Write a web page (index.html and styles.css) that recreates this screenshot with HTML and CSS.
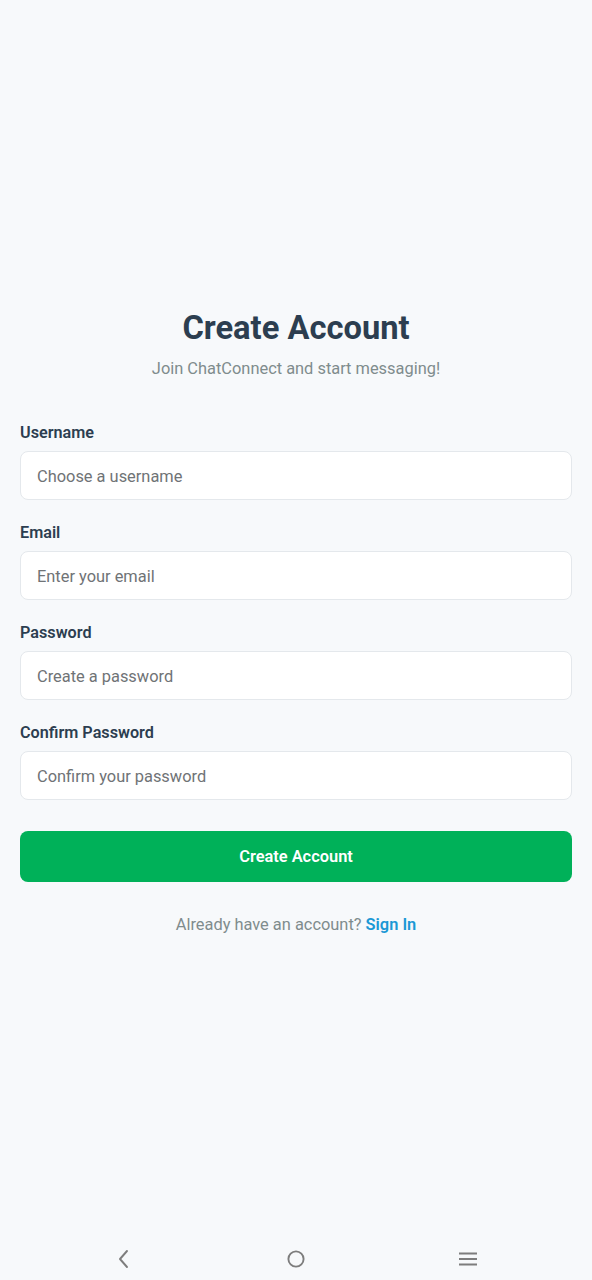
FILE: index.html
```html
<!DOCTYPE html>
<html lang="en">
<head>
<meta charset="utf-8">
<meta name="viewport" content="width=device-width, initial-scale=1">
<title>Create Account</title>
<link rel="stylesheet" href="styles.css">
</head>
<body>
<div class="screen">
  <main class="content">
    <h1 class="title">Create Account</h1>
    <p class="subtitle">Join ChatConnect and start messaging!</p>
    <form class="form">
      <div class="field">
        <label class="label">Username</label>
        <input class="input" type="text" placeholder="Choose a username">
      </div>
      <div class="field">
        <label class="label">Email</label>
        <input class="input" type="email" placeholder="Enter your email">
      </div>
      <div class="field">
        <label class="label">Password</label>
        <input class="input" type="password" placeholder="Create a password">
      </div>
      <div class="field">
        <label class="label">Confirm Password</label>
        <input class="input" type="password" placeholder="Confirm your password">
      </div>
      <button class="btn" type="button">Create Account</button>
    </form>
    <p class="signin">Already have an account? <a class="link" href="#">Sign In</a></p>
  </main>
  <nav class="navbar">
    <svg class="nav-icon" width="24" height="24" viewBox="0 0 24 24"><path d="M16 4 L9 12 L16 20" fill="none" stroke="#7d7d7d" stroke-width="1.9" stroke-linecap="round" stroke-linejoin="round"/></svg>
    <svg class="nav-icon" width="24" height="24" viewBox="0 0 24 24"><circle cx="12" cy="12" r="7.6" fill="none" stroke="#7d7d7d" stroke-width="1.9"/></svg>
    <svg class="nav-icon" width="24" height="24" viewBox="0 0 24 24"><path d="M3 6.5 H21 M3 12 H21 M3 17.5 H21" fill="none" stroke="#7d7d7d" stroke-width="1.9"/></svg>
  </nav>
</div>
</body>
</html>
```
FILE: styles.css
```css
* { box-sizing: border-box; }
html, body {
  margin: 0;
  padding: 0;
  background: #f7f9fb;
  font-family: Roboto, "Liberation Sans", Arial, sans-serif;
}
.screen {
  width: 592px;
  height: 1280px;
  display: flex;
  flex-direction: column;
}
.content {
  flex: 1;
  padding: 309px 20px 0;
  display: flex;
  flex-direction: column;
}
.title {
  margin: 0 0 12px;
  font-size: 32.7px;
  line-height: 38px;
  font-weight: 700;
  color: #2c3e50;
  text-align: center;
}
.subtitle {
  margin: 0 0 43px;
  font-size: 16.4px;
  line-height: 20px;
  color: #7f8c8d;
  text-align: center;
}
.form {
  display: flex;
  flex-direction: column;
}
.field {
  display: flex;
  flex-direction: column;
  margin-bottom: 22px;
}
.field:last-of-type { margin-bottom: 31px; }
.label {
  font-size: 16.2px;
  line-height: 20px;
  font-weight: 600;
  color: #2c3e50;
  padding-top: 1px;
  margin-bottom: 8px;
}
.input {
  height: 49px;
  width: 100%;
  padding: 1px 16px 0;
  border: 1px solid #e4e8ec;
  border-radius: 8px;
  background: #ffffff;
  font-family: inherit;
  font-size: 16.4px;
  color: #2c3e50;
  outline: none;
}
.input::placeholder { color: #6f7376; }
.btn {
  height: 51px;
  width: 100%;
  border: none;
  border-radius: 8px;
  background: #00b159;
  color: #ffffff;
  font-family: inherit;
  font-size: 16.4px;
  font-weight: 600;
  padding-top: 1px;
}
.signin {
  margin: 33px 0 0;
  font-size: 16.4px;
  line-height: 20px;
  color: #7f8c8d;
  text-align: center;
}
.link {
  color: #1b98d5;
  font-weight: 600;
  text-decoration: none;
}
.navbar {
  height: 46px;
  display: flex;
  justify-content: space-between;
  align-items: flex-start;
  padding: 13px 112px 0 111px;
}
.nav-icon { display: block; }
```
